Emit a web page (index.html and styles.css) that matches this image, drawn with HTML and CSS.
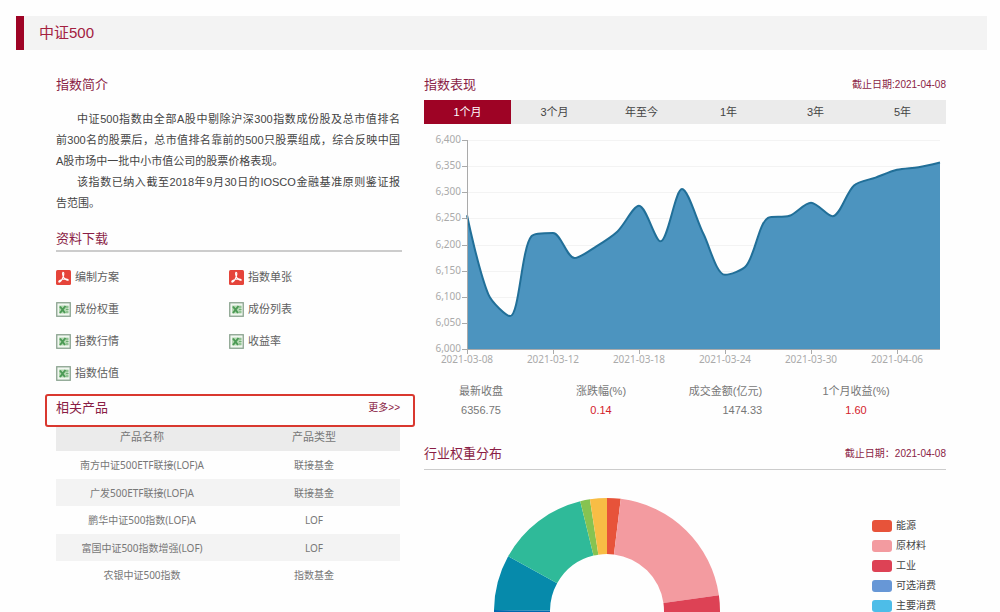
FILE: index.html
```html
<!DOCTYPE html>
<html lang="zh-CN">
<head>
<meta charset="utf-8">
<title>中证500</title>
<link rel="stylesheet" href="styles.css">
</head>
<body>
<svg class="defs" aria-hidden="true">
  <symbol id="icon-pdf" viewBox="0 0 15 15">
    <rect width="15" height="15" rx="1.5" fill="#e5443a"/>
    <path d="M6.9 2.4C8.3 2.300 7.900 5 7.100 7C6.300 9 4.500 12.200 3.100 12.100C1.900 11.700 4 9.900 6.500 9.300C9 8.700 12.300 8.700 12.300 9.900C12.100 11 9.500 9.800 8.200 8.100C6.900 6.400 6 3 6.900 2.400Z" fill="none" stroke="#fff" stroke-width="1.1"/>
  </symbol>
  <symbol id="icon-xls" viewBox="0 0 15 15">
    <rect x=".75" y=".75" width="13.500" height="13.500" fill="#f1f7f0" stroke="#8aa38f" stroke-width="1.300"/>
    <rect x="3" y="3.500" width="9.500" height="8" fill="#b5d8b3"/>
    <path d="M4 4.500L9 11M9.500 4L4 11" stroke="#4c9a55" stroke-width="2"/>
    <path d="M10 5h2.500M10 7.500h2.500M10 10h2.500" stroke="#6fae74" stroke-width="1.200"/>
  </symbol>
</svg>
<div class="page">
  <header class="page-head"><h1>中证500</h1></header>
  <main class="columns">
    <div class="col">
      <section>
        <h2>指数简介</h2>
        <div class="intro">
          <p>中证500指数由全部A股中剔除沪深300指数成份股及总市值排名<span class="keep">前300名</span>的股票后，总市值排名靠前的500只股票组成，综合反映中国<span class="keep">A股市场</span>中一批中小市值公司的股票价格表现。</p>
          <p>该指数已纳入截至2018年9月30日的IOSCO金融基准原则鉴证报<span class="keep">告范围。</span></p>
        </div>
      </section>
      <section>
        <div class="section-head ruled"><h2>资料下载</h2></div>
        <ul class="downloads">
          <li><a href="#"><svg><use href="#icon-pdf"/></svg>编制方案</a></li>
          <li><a href="#"><svg><use href="#icon-pdf"/></svg>指数单张</a></li>
          <li><a href="#"><svg><use href="#icon-xls"/></svg>成份权重</a></li>
          <li><a href="#"><svg><use href="#icon-xls"/></svg>成份列表</a></li>
          <li><a href="#"><svg><use href="#icon-xls"/></svg>指数行情</a></li>
          <li><a href="#"><svg><use href="#icon-xls"/></svg>收益率</a></li>
          <li><a href="#"><svg><use href="#icon-xls"/></svg>指数估值</a></li>
        </ul>
      </section>
      <section>
        <div class="section-head marked"><h2>相关产品</h2><a class="note" href="#">更多&gt;&gt;</a></div>
        <table class="products">
          <thead><tr><th>产品名称</th><th>产品类型</th></tr></thead>
          <tbody>
            <tr><td>南方中证500ETF联接(LOF)A</td><td>联接基金</td></tr>
            <tr><td>广发500ETF联接(LOF)A</td><td>联接基金</td></tr>
            <tr><td>鹏华中证500指数(LOF)A</td><td>LOF</td></tr>
            <tr><td>富国中证500指数增强(LOF)</td><td>LOF</td></tr>
            <tr><td>农银中证500指数</td><td>指数基金</td></tr>
          </tbody>
        </table>
      </section>
    </div>
    <div class="col">
      <section>
        <div class="section-head"><h2>指数表现</h2><span class="note">截止日期:2021-04-08</span></div>
        <div class="tabs">
          <button type="button" class="active">1个月</button>
          <button type="button">3个月</button>
          <button type="button">年至今</button>
          <button type="button">1年</button>
          <button type="button">3年</button>
          <button type="button">5年</button>
        </div>
        <svg class="chart" id="trend" viewBox="0 0 522 246" role="img" aria-label="指数表现"></svg>
        <div class="stats">
          <dl><dt>最新收盘</dt><dd>6356.75</dd></dl>
          <dl><dt>涨跌幅(%)</dt><dd class="up">0.14</dd></dl>
          <dl class="amount"><dt>成交金额(亿元)</dt><dd>1474.33</dd></dl>
          <dl><dt>1个月收益(%)</dt><dd class="up">1.60</dd></dl>
        </div>
      </section>
      <section>
        <div class="section-head ruled weights-head"><h2>行业权重分布</h2><span class="note">截止日期：2021-04-08</span></div>
        <div class="weights">
          <svg class="donut" id="donut" viewBox="0 0 448 260" role="img" aria-label="行业权重分布"></svg>
          <ul class="legend">
            <li><i class="energy"></i>能源</li>
            <li><i class="material"></i>原材料</li>
            <li><i class="industry"></i>工业</li>
            <li><i class="optional"></i>可选消费</li>
            <li><i class="staple"></i>主要消费</li>
          </ul>
        </div>
      </section>
    </div>
  </main>
</div>
<script src="charts.js"></script>
</body>
</html>
```

FILE: styles.css
```css
* { box-sizing: border-box; }

body, h1, h2, p, ul, dl, dd { margin: 0; padding: 0; }

body {
  background: #fefefe;
  color: #444;
  font: 11px/21px "Liberation Sans", "Noto Sans CJK SC", sans-serif;
}

ul { list-style: none; }
a { color: inherit; text-decoration: none; }
.defs { display: none; }

.page {
  height: 100vh;
  overflow: hidden;
  padding: 16px 13px 0 16px;
}

.page-head {
  border-left: 8px solid #9e0325;
  background: #f3f3f3;
  padding-left: 15px;
}

h1 {
  color: #a3203f;
  font-size: 15px;
  font-weight: 400;
  line-height: 34px;
}

h2 {
  color: #8a1d45;
  font-size: 13px;
  font-weight: 400;
  line-height: 20px;
}

.columns {
  display: grid;
  grid-template-columns: 346fr 522fr;
  gap: 22px;
  padding: 25px 41px 0 40px;
}

.intro {
  margin: 14px 2px 15px 0;
  text-align: justify;
}

.intro p { text-indent: 21px; }
.keep { white-space: nowrap; }

.section-head {
  position: relative;
  display: flex;
  align-items: center;
  justify-content: space-between;
}

.note {
  color: #8a1d45;
  font-size: 10px;
  line-height: 20px;
}

.ruled {
  border-bottom: 2px solid #ccc;
  padding-bottom: 1px;
}

.downloads {
  display: grid;
  grid-template-columns: 1fr 1fr;
  margin-top: 9px;
  color: #606060;
}

.downloads a {
  display: flex;
  align-items: center;
  gap: 4px;
  height: 32px;
}

.downloads svg { width: 15px; height: 15px; }

.marked {
  margin-top: 4px;
  height: 34px;
  padding: 0 2px 4px 0;
}

.marked::after {
  content: "";
  position: absolute;
  inset: 1px -13px 0 -11px;
  border: 2px solid #d9382f;
  border-radius: 3px;
  pointer-events: none;
}

.products {
  width: calc(100% - 2px);
  table-layout: fixed;
  border-collapse: collapse;
  color: #777;
  font-family: "Noto Sans", "Noto Sans CJK SC", sans-serif;
  text-align: center;
}

.products th, .products td {
  height: 28px;
  padding: 0;
  font-size: 10px;
  font-weight: 400;
  line-height: 20px;
}

.products th {
  height: 24px;
  padding-bottom: 4px;
  background: #ebebeb;
  font-size: 11px;
}

.products tbody tr:nth-child(even) { background: #f3f3f3; }
.products tbody tr:nth-child(even) td { height: 27px; }

.tabs {
  display: grid;
  grid-template-columns: repeat(6, 1fr);
  margin-top: 5px;
  background: #ebebeb;
}

.tabs button {
  height: 24px;
  border: 0;
  padding: 0;
  background: none;
  color: #444;
  font: inherit;
}

.tabs .active { background: #9e0325; color: #fff; }

.chart { display: block; width: 100%; }

.chart text {
  fill: #aaa;
  font: 10px "Noto Sans", "Noto Sans CJK SC", sans-serif;
}

.stats {
  display: grid;
  grid-template-columns: 114fr 126fr 123fr 138fr 21fr;
  justify-items: center;
  margin-top: 12px;
  color: #777;
  line-height: 19px;
  text-align: center;
}

.stats .amount { text-align: right; }
.stats .up { color: #d4212b; }

.weights-head {
  margin-top: 24px;
  border-bottom: 1px solid #ccc;
  padding-bottom: 5px;
}

.weights { display: flex; align-items: flex-start; }
.donut { flex: 1; min-width: 0; }
.legend { width: 74px; padding-top: 46px; }

.legend li {
  display: flex;
  align-items: center;
  gap: 4px;
  font-size: 10px;
  line-height: 20px;
}

.legend i {
  width: 20px;
  height: 12px;
  border-radius: 3px;
}

.energy { background: #e7533a; }
.material { background: #f39ba0; }
.industry { background: #dd4255; }
.optional { background: #6797d6; }
.staple { background: #4dbde8; }
```

FILE: charts.js
```javascript
function add(parent, tag, attrs, text) {
  const node = document.createElementNS("http://www.w3.org/2000/svg", tag);
  for (const key in attrs) node.setAttribute(key, attrs[key]);
  if (text) node.textContent = text;
  parent.appendChild(node);
}

function drawTrend() {
  const svg = document.getElementById("trend");
  const left = 43, right = 516, top = 16, bottom = 225;
  const smooth = 0.3;
  const values = [6256, 6104, 6063, 6216, 6222, 6174, 6196, 6225, 6274, 6206, 6306,
    6220, 6142, 6160, 6251, 6255, 6280, 6254, 6313, 6328, 6343, 6348, 6357];
  const dates = ["2021-03-08", "2021-03-12", "2021-03-18", "2021-03-24", "2021-03-30", "2021-04-06"];
  const step = (right - left) / (values.length - 1);
  const toY = v => bottom - (v - 6000) / 400 * (bottom - top);
  const pts = values.map((v, i) => [left + i * step, toY(v)]);

  for (let v = 6000; v <= 6400; v += 50) {
    const y = Math.round(toY(v)) + 0.5;
    add(svg, "path", { d: `M${left} ${y}H${right}`, stroke: "#f3f3f3" });
    add(svg, "path", { d: `M${left - 5} ${y}H${left}`, stroke: "#aaa" });
    add(svg, "text", { x: left - 6, y: y + 2, "text-anchor": "end" }, v.toLocaleString("en-US"));
  }

  const clamp = (v, a, b) => Math.max(Math.min(a, b), Math.min(Math.max(a, b), v));
  const handles = pts.map((p, i) => {
    const a = pts[i - 1], b = pts[i + 1];
    if (!a || !b) return [p, p];
    const dx = b[0] - a[0], dy = b[1] - a[1];
    const la = Math.hypot(p[0] - a[0], p[1] - a[1]);
    const lb = Math.hypot(p[0] - b[0], p[1] - b[1]);
    const r = lb / (la + lb);
    const outY = clamp(p[1] + dy * smooth * r, b[1], p[1]);
    const out = [p[0] + dx * smooth * r, outY];
    const inn = [p[0] - (out[0] - p[0]) * la / lb, clamp(p[1] - (outY - p[1]) * la / lb, a[1], p[1])];
    return [inn, [out[0], p[1] - (inn[1] - p[1]) * lb / la]];
  });
  let line = `M${pts[0]}`;
  for (let i = 1; i < pts.length; i++) line += `C${handles[i - 1][1]} ${handles[i][0]} ${pts[i]}`;

  add(svg, "path", { d: `${line}V${bottom}H${left}Z`, fill: "#4c94bf" });
  add(svg, "path", { d: line, fill: "none", stroke: "#216f98", "stroke-width": 2 });
  add(svg, "path", { d: `M${left + 0.5} ${top}V${bottom + 0.5}H${right}`, fill: "none", stroke: "#aaa" });
  dates.forEach((date, i) => {
    const x = Math.round(left + i * 4 * step);
    add(svg, "path", { d: `M${x + 0.5} ${bottom}v5`, stroke: "#aaa" });
    add(svg, "text", { x, y: 239, "text-anchor": "middle" }, date);
  });
}

function drawDonut() {
  const svg = document.getElementById("donut");
  const cx = 183, cy = 141, outer = 113, inner = 57;
  const slices = [[0, 7, "#e7533a"], [7, 82, "#f39ba0"], [82, 150, "#dd4255"], [150, 180, "#6797d6"],
    [180, 210, "#4dbde8"], [210, 270.5, "#0067ae"], [270.5, 299, "#068aab"],
    [299, 346.3, "#2fba99"], [346.3, 351.3, "#86c351"], [351.3, 360, "#f8bd45"]];
  const at = (r, deg) => {
    const a = deg * Math.PI / 180;
    return [cx + r * Math.sin(a), cy - r * Math.cos(a)];
  };
  for (const [from, to, fill] of slices) {
    add(svg, "path", {
      d: `M${at(outer, from)}A${outer} ${outer} 0 0 1 ${at(outer, to)}L${at(inner, to)}A${inner} ${inner} 0 0 0 ${at(inner, from)}Z`,
      fill
    });
  }
}

drawTrend();
drawDonut();
```
